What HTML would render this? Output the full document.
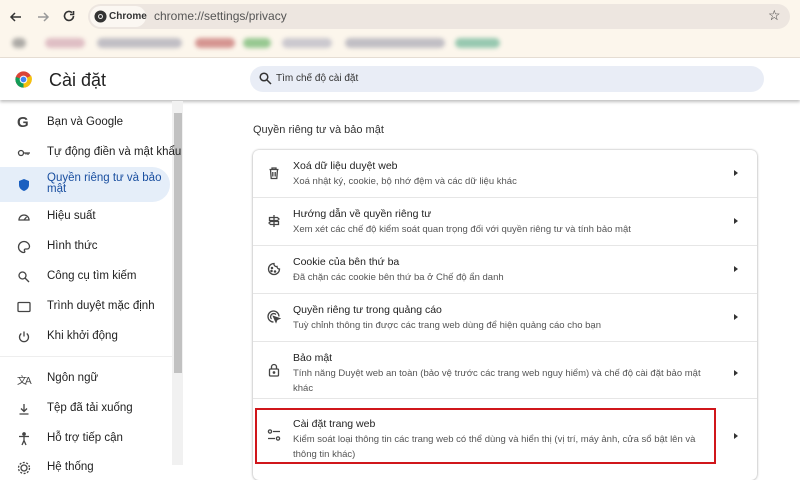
<!DOCTYPE html><html><head><meta charset="utf-8"><style>
*{margin:0;padding:0;box-sizing:border-box}
body{width:800px;height:465px;overflow:hidden;background:#fff;font-family:"Liberation Sans",sans-serif;color:#1f1f1f;position:relative}
.top{position:absolute;left:0;top:0;width:800px;height:58px;background:#fcf6ec;border-bottom:1px solid #e8e0d6}
.omni{position:absolute;left:88px;top:4px;width:702px;height:25px;border-radius:13px;background:#ede6e0}
.chip{position:absolute;left:90px;top:6px;width:56px;height:21px;border-radius:11px;background:#fbf7f2;font-size:10px;font-weight:bold;line-height:21px;padding-left:19px;color:#333}
.url{position:absolute;left:154px;top:9px;font-size:12px;color:#555}
.bm{position:absolute;top:38px;height:10px;border-radius:5px;filter:blur(2px);opacity:.6}
.hdr{position:absolute;left:0;top:58px;width:800px;height:42px;background:#fff;box-shadow:0 2px 3px rgba(0,0,0,.25)}
.side{position:absolute;left:0;top:101px;width:172px}
.it{position:absolute;left:0;width:172px;font-size:11.5px;color:#222;white-space:nowrap;height:14px}
.it span{position:absolute;left:47px;top:0}
.ic{position:absolute;left:17px;top:0;width:14px;height:14px}
.card{position:absolute;left:253px;top:150px;width:504px;height:330px;border-radius:6px;box-shadow:0 0 2px rgba(0,0,0,.3),0 1px 3px rgba(0,0,0,.12);background:#fff}
.row{position:absolute;left:0;width:504px;border-top:1px solid #e6e6e6}
.t{position:absolute;left:40px;font-size:10.5px;color:#222}
.s{position:absolute;left:40px;font-size:9.5px;color:#555;line-height:15px;width:425px}
.ar{position:absolute;left:481px;width:0;height:0;border-left:4px solid #333;border-top:3.5px solid transparent;border-bottom:3.5px solid transparent}
.ri{position:absolute;left:14px;width:14px;height:14px}
svg.st{fill:none;stroke:#444;stroke-width:1.3}
</style></head><body>
<div class="top">
<svg style="position:absolute;left:9px;top:10px" width="14" height="14" viewBox="0 0 14 14" fill="none" stroke="#333" stroke-width="1.5"><path d="M12 7H2M6 3L2 7l4 4"/></svg>
<svg style="position:absolute;left:36px;top:10px" width="14" height="14" viewBox="0 0 14 14" fill="none" stroke="#999" stroke-width="1.5"><path d="M2 7h10M8 3l4 4-4 4"/></svg>
<svg style="position:absolute;left:62px;top:9px" width="14" height="14" viewBox="0 0 14 14" fill="none" stroke="#333" stroke-width="1.6"><path d="M11.5 7A4.5 4.5 0 1 1 10 3.6"/><path d="M11.5 2v3.5H8" /></svg>
<div class="omni"></div>
<div class="chip"><svg style="position:absolute;left:4px;top:4px" width="13" height="13" viewBox="0 0 14 14"><circle cx="7" cy="7" r="6.5" fill="#333"/><circle cx="7" cy="7" r="2.6" fill="#fff"/><circle cx="7" cy="7" r="1.6" fill="#333"/></svg>Chrome</div>
<div class="url">chrome://settings/privacy</div>
<div style="position:absolute;left:768px;top:7px;font-size:14px;color:#333">☆</div>
<div class="bm" style="left:12px;width:14px;background:#777"></div>
<div class="bm" style="left:45px;width:40px;background:#c9a"></div>
<div class="bm" style="left:97px;width:85px;background:#99a"></div>
<div class="bm" style="left:195px;width:40px;background:#b55"></div>
<div class="bm" style="left:243px;width:28px;background:#5a5"></div>
<div class="bm" style="left:282px;width:50px;background:#aab"></div>
<div class="bm" style="left:345px;width:100px;background:#99a"></div>
<div class="bm" style="left:455px;width:45px;background:#5a8"></div>
</div>
<div class="hdr">
<svg style="position:absolute;left:15px;top:13px" width="17" height="17" viewBox="0 0 20 20"><circle cx="10" cy="10" r="9.5" fill="#db4437"/><path d="M10 10L1.8 14.8A9.5 9.5 0 0 0 10 19.5z" fill="#0f9d58"/><path d="M10 10L1.8 14.8A9.5 9.5 0 0 1 1 7 z" fill="#0f9d58"/><path d="M10 10l8.2 4.8A9.5 9.5 0 0 1 10 19.5z" fill="#f4c20d"/><path d="M10 10l8.2 4.8A9.5 9.5 0 0 0 19 5.5 z" fill="#f4c20d"/><circle cx="10" cy="10" r="4.5" fill="#fff"/><circle cx="10" cy="10" r="3.4" fill="#4285f4"/></svg>
<div style="position:absolute;left:49px;top:12px;font-size:18px;color:#222">Cài đặt</div>
<div style="position:absolute;left:250px;top:8px;width:514px;height:26px;border-radius:13px;background:#e9edf6"></div>
<svg style="position:absolute;left:259px;top:14px" width="13" height="13" viewBox="0 0 13 13" fill="none" stroke="#333" stroke-width="1.5"><circle cx="5" cy="5" r="3.8"/><path d="M8 8l4 4"/></svg>
<div style="position:absolute;left:276px;top:15px;font-size:10px;color:#333">Tìm chế độ cài đặt</div>
</div>
<div style="position:absolute;left:172px;top:101px;width:11px;height:364px;background:#f1f1f1"></div>
<div style="position:absolute;left:174px;top:113px;width:8px;height:260px;background:#c1c1c1"></div>
<div style="position:absolute;left:0;top:356px;width:172px;height:1px;background:#eee"></div>
<div style="position:absolute;left:0;top:167px;width:170px;height:35px;border-radius:0 18px 18px 0;background:#e5eef9"></div>
<div class="side">
<div class="it" style="top:15px"><div class="ic" style="font-weight:bold;font-size:15px;top:-2px;color:#444">G</div><span>Bạn và Google</span></div>
<div class="it" style="top:45px"><svg class="ic st" viewBox="0 0 14 14"><circle cx="4" cy="7" r="2.5"/><path d="M6.5 7H13M11 7v2M9 7v1.5"/></svg><span>Tự động điền và mật khẩu</span></div>
<div class="it" style="top:72px;color:#1a4fa0;line-height:11px;height:24px"><svg class="ic" style="top:5px" viewBox="0 0 14 14"><path d="M7 1l5 2v4c0 3-2.5 5.2-5 6-2.5-.8-5-3-5-6V3z" fill="#1a5fc0"/></svg><span>Quyền riêng tư và bảo<br>mật</span></div>
<div class="it" style="top:109px"><svg class="ic st" viewBox="0 0 14 14"><path d="M2 10a5 5 0 1 1 10 0z"/><path d="M7 10l2.5-3"/></svg><span>Hiệu suất</span></div>
<div class="it" style="top:139px"><svg class="ic st" viewBox="0 0 14 14"><path d="M7 1.5a5.5 5.5 0 1 0 0 11c1 0 1-1 .5-1.7-.5-.8 0-1.8 1-1.8H10a2.5 2.5 0 0 0 2.5-2.5C12.5 4 10 1.5 7 1.5z"/></svg><span>Hình thức</span></div>
<div class="it" style="top:169px"><svg class="ic st" viewBox="0 0 14 14"><circle cx="5.5" cy="5.5" r="3.5"/><path d="M8 8l4 4"/></svg><span>Công cụ tìm kiếm</span></div>
<div class="it" style="top:199px"><svg class="ic st" viewBox="0 0 14 14"><rect x="1" y="2.5" width="12" height="9" rx="1"/></svg><span>Trình duyệt mặc định</span></div>
<div class="it" style="top:229px"><svg class="ic st" viewBox="0 0 14 14"><path d="M7 1.5v5M4.3 3.5a4.5 4.5 0 1 0 5.4 0"/></svg><span>Khi khởi động</span></div>
<div class="it" style="top:271px"><div class="ic" style="font-size:10px;color:#444;letter-spacing:-2px">文A</div><span>Ngôn ngữ</span></div>
<div class="it" style="top:301px"><svg class="ic st" viewBox="0 0 14 14"><path d="M7 2v7M4 6.5L7 9.5l3-3M2.5 12h9"/></svg><span>Tệp đã tải xuống</span></div>
<div class="it" style="top:331px"><svg class="ic st" viewBox="0 0 14 14"><circle cx="7" cy="2" r="1.2" fill="#444"/><path d="M2 4.5h10M7 4.5v4M5 13l2-4.5 2 4.5"/></svg><span>Hỗ trợ tiếp cận</span></div>
<div class="it" style="top:360px"><svg class="ic st" viewBox="0 0 14 14"><circle cx="7" cy="7" r="3"/><circle cx="7" cy="7" r="5.5" stroke-dasharray="2 1.5"/></svg><span>Hệ thống</span></div>
</div>
<div style="position:absolute;left:253px;top:124px;font-size:11px;color:#333">Quyền riêng tư và bảo mật</div>
<div class="card">
<div class="row" style="top:0;height:47px;border-top:none"><svg class="ri st" style="top:16px" viewBox="0 0 14 14"><path d="M2.5 3.5h9M5 3.5V2h4v1.5M3.5 3.5l.7 9h5.6l.7-9M5.8 6v4.5M8.2 6v4.5"/></svg><div class="t" style="top:10px">Xoá dữ liệu duyệt web</div><div class="s" style="top:24px">Xoá nhật ký, cookie, bộ nhớ đệm và các dữ liệu khác</div><div class="ar" style="top:20px"></div></div>
<div class="row" style="top:47px;height:48px"><svg class="ri st" style="top:16px" viewBox="0 0 14 14"><path d="M7 1v12M2.5 3.5h8l1.5 1.5-1.5 1.5h-8zM11.5 7.5h-8L2 9l1.5 1.5h8z"/></svg><div class="t" style="top:10px">Hướng dẫn về quyền riêng tư</div><div class="s" style="top:24px">Xem xét các chế độ kiểm soát quan trọng đối với quyền riêng tư và tính bảo mật</div><div class="ar" style="top:20px"></div></div>
<div class="row" style="top:95px;height:48px"><svg class="ri st" style="top:16px" viewBox="0 0 14 14"><path d="M7 1.5a5.5 5.5 0 1 0 5.5 5.5A2.5 2.5 0 0 1 10 4.5 2.5 2.5 0 0 1 7 1.5z"/><circle cx="5" cy="6" r=".6" fill="#444"/><circle cx="8" cy="9.5" r=".6" fill="#444"/><circle cx="4.5" cy="9" r=".6" fill="#444"/></svg><div class="t" style="top:10px">Cookie của bên thứ ba</div><div class="s" style="top:24px">Đã chặn các cookie bên thứ ba ở Chế độ ẩn danh</div><div class="ar" style="top:20px"></div></div>
<div class="row" style="top:143px;height:48px"><svg class="ri st" style="top:16px" viewBox="0 0 14 14"><path d="M12 6.5A5.5 5.5 0 1 0 6.5 12"/><path d="M9 4.5A3 3 0 1 0 4.5 9"/><path d="M6.5 6.5l6 2-2.5 1-1 2.5z" fill="#444"/></svg><div class="t" style="top:10px">Quyền riêng tư trong quảng cáo</div><div class="s" style="top:24px">Tuỳ chỉnh thông tin được các trang web dùng để hiện quảng cáo cho bạn</div><div class="ar" style="top:20px"></div></div>
<div class="row" style="top:191px;height:57px"><svg class="ri st" style="top:21px" viewBox="0 0 14 14"><rect x="2.5" y="6" width="9" height="7" rx="1"/><path d="M4.5 6V4a2.5 2.5 0 0 1 5 0v2"/><circle cx="7" cy="9.5" r=".7" fill="#444"/></svg><div class="t" style="top:10px">Bảo mật</div><div class="s" style="top:24px">Tính năng Duyệt web an toàn (bảo vệ trước các trang web nguy hiểm) và chế độ cài đặt bảo mật khác</div><div class="ar" style="top:28px"></div></div>
<div class="row" style="top:248px;height:80px"><svg class="ri st" style="top:29px" viewBox="0 0 14 14"><circle cx="3" cy="3.5" r="1.6"/><path d="M6 3.5h7M1 10.5h7"/><circle cx="11" cy="10.5" r="1.6"/></svg><div class="t" style="top:19px">Cài đặt trang web</div><div class="s" style="top:33px">Kiểm soát loại thông tin các trang web có thể dùng và hiển thị (vị trí, máy ảnh, cửa sổ bật lên và thông tin khác)</div><div class="ar" style="top:34px"></div></div>
</div>
<div style="position:absolute;left:255px;top:408px;width:461px;height:56px;border:2px solid #d0161b"></div>
</body></html>
